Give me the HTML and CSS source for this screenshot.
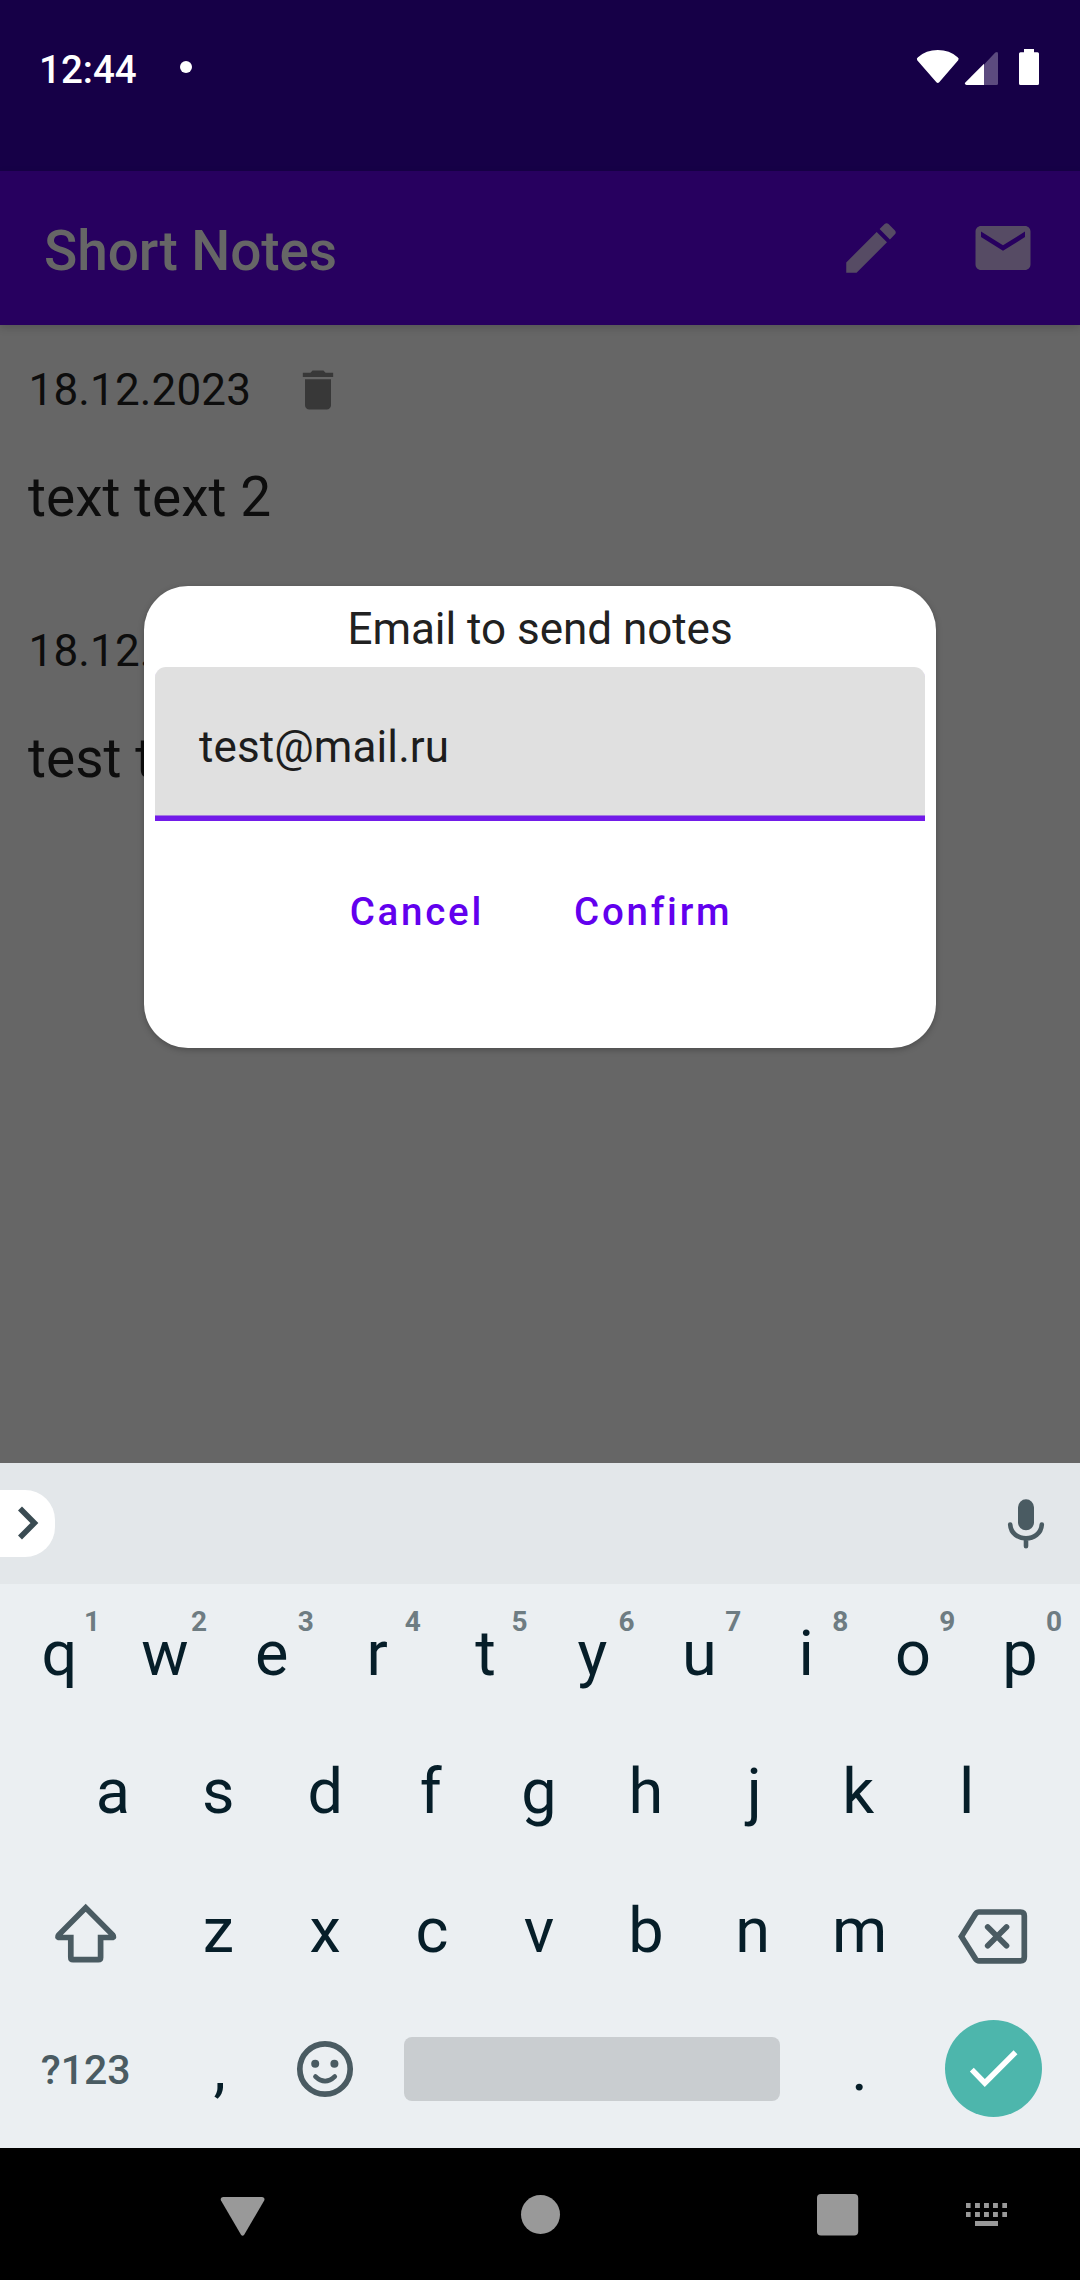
FILE: index.html
```html
<!DOCTYPE html>
<html lang="en">
<head>
<meta charset="utf-8">
<title>Short Notes</title>
<link rel="stylesheet" href="styles.css">
</head>
<body>
<div class="screen">
  <header class="status">
    <span class="time">12:44</span>
    <span class="notification"></span>
    <svg class="status-icons" viewBox="915 47 126 40" width="126" height="40">
      <path fill="#fff" d="M917.2 60.2Q916.2 58.4 918 57.2Q926 50 937.8 50T957.6 57.2Q959.4 58.4 958.2 60.2L939.2 82.2Q937.8 83.8 936.4 82.2Z"/>
      <path fill="#5c4b7f" d="M984 64.5L995.3 52.6Q998 51 998 53.5V83.5Q998 85 996.5 85H984Z"/>
      <path fill="#fff" d="M984 63.8V85H966.5Q964 84.300 965.3 82.500Z"/>
      <path fill="#fff" d="M1024 49h10v3.300h3.500q1.500 0 1.500 1.500v29.700q0 1.500-1.500 1.500h-17q-1.500 0-1.500-1.500v-29.700q0-1.500 1.500-1.500h3.500z"/>
    </svg>
  </header>

  <div class="appbar">
    <h1 class="title">Short Notes</h1>
    <button class="action" aria-label="Edit">
      <svg viewBox="0 0 24 24" width="66" height="66"><path d="M3 17.250V21h3.750L17.810 9.940l-3.750-3.750L3 17.250zM20.710 7.040c.39-.39.39-1.020 0-1.410l-2.340-2.340c-.39-.39-1.020-.39-1.410 0l-1.830 1.830 3.750 3.750 1.830-1.830z"/></svg>
    </button>
    <button class="action" aria-label="Send by email">
      <svg viewBox="0 0 24 24" width="66" height="66"><path d="M20 4H4c-1.100 0-1.990.9-1.990 2L2 18c0 1.100.9 2 2 2h16c1.100 0 2-.9 2-2V6c0-1.100-.9-2-2-2zm0 4l-8 5-8-5V6l8 5 8-5v2z"/></svg>
    </button>
  </div>

  <main class="notes">
    <article class="note">
      <div class="note-head">
        <span class="date">18.12.2023</span>
        <svg class="trash" viewBox="0 0 24 24" width="52" height="52"><path d="M6 19c0 1.100.9 2 2 2h8c1.100 0 2-.9 2-2V7H6v12zM19 4h-3.500l-1-1h-5l-1 1H5v2h14V4z"/></svg>
      </div>
      <p class="note-text">text text 2</p>
    </article>
    <article class="note">
      <div class="note-head">
        <span class="date">18.12.2023</span>
      </div>
      <p class="note-text">test text</p>
    </article>
    <section class="dialog">
      <h2 class="dialog-title">Email to send notes</h2>
      <div class="field">test@mail.ru</div>
      <div class="buttons">
        <button class="text-button">Cancel</button>
        <button class="text-button">Confirm</button>
      </div>
    </section>
  </main>

  <section class="keyboard">
    <div class="suggestions">
      <span class="expand">
        <svg viewBox="0 1490 56 67" width="56" height="67"><path d="M20 1508.500L34.400 1523L20 1537.500" fill="none" stroke="#3a4b52" stroke-width="5.600"/></svg>
      </span>
      <svg viewBox="1006 1496 40 54" width="40" height="54">
        <rect x="1018" y="1498.300" width="16" height="31" rx="8" fill="#4a5b62"/>
        <path d="M1010.200 1523.500C1011.400 1542 1040.600 1542 1041.800 1523.500M1026 1538V1545.300" fill="none" stroke="#4a5b62" stroke-width="4.600" stroke-linecap="round"/>
      </svg>
    </div>
    <div class="row">
      <span class="key nudge-right">q<sup class="hint">1</sup></span>
      <span class="key">w<sup class="hint">2</sup></span>
      <span class="key">e<sup class="hint">3</sup></span>
      <span class="key nudge-left">r<sup class="hint">4</sup></span>
      <span class="key">t<sup class="hint">5</sup></span>
      <span class="key">y<sup class="hint">6</sup></span>
      <span class="key">u<sup class="hint">7</sup></span>
      <span class="key">i<sup class="hint">8</sup></span>
      <span class="key">o<sup class="hint">9</sup></span>
      <span class="key">p<sup class="hint">0</sup></span>
    </div>
    <div class="row row-inset">
      <span class="key nudge-right">a</span>
      <span class="key">s</span>
      <span class="key">d</span>
      <span class="key nudge-left">f</span>
      <span class="key">g</span>
      <span class="key">h</span>
      <span class="key nudge-right">j</span>
      <span class="key nudge-left">k</span>
      <span class="key">l</span>
    </div>
    <div class="row">
      <span class="key wide">
        <svg viewBox="45 1891 80 80" width="80" height="80"><path d="M85.700 1907.700L58.800 1934.800Q56.600 1937.500 59.500 1937.500H70.800V1957.500Q70.800 1959.700 73 1959.700H98.400Q100.600 1959.700 100.600 1957.500V1937.500H111.900Q114.800 1937.500 112.600 1934.800Z" fill="none" stroke="#4a5b62" stroke-width="5.700"/></svg>
      </span>
      <span class="key">z</span>
      <span class="key">x</span>
      <span class="key">c</span>
      <span class="key">v</span>
      <span class="key">b</span>
      <span class="key">n</span>
      <span class="key">m</span>
      <span class="key wide">
        <svg viewBox="953 1891 80 80" width="80" height="80"><path d="M961.400 1936.400L975.600 1913.800Q976.800 1912 979 1912H1020.500Q1024.300 1912 1024.300 1915.800V1957Q1024.300 1960.800 1020.500 1960.800H979Q976.800 1960.800 975.600 1959ZM987.700 1927L1006.500 1945.800M1006.500 1927L987.700 1945.800" fill="none" stroke="#4a5b62" stroke-width="5.700" stroke-linecap="round"/></svg>
      </span>
    </div>
    <div class="row">
      <span class="key wide symbols">?123</span>
      <span class="key nudge-right">,</span>
      <span class="key">
        <svg viewBox="285 2029 80 80" width="80" height="80" fill="none" stroke="#4a5b62">
          <circle cx="325" cy="2069" r="25.200" stroke-width="5.700"/>
          <circle cx="315.200" cy="2063.700" r="4" fill="#4a5b62" stroke="none"/>
          <circle cx="334.400" cy="2063.700" r="4" fill="#4a5b62" stroke="none"/>
          <path d="M315.400 2076.500Q325 2085.700 334.800 2076.500" stroke-width="4.600" stroke-linecap="round"/>
        </svg>
      </span>
      <span class="key space"><span class="spacebar"></span></span>
      <span class="key">.</span>
      <span class="key wide">
        <svg viewBox="943 2019 100 100" width="100" height="100"><circle cx="993.500" cy="2068.500" r="48.500" fill="#4db6ac"/><path d="M971.800 2069.700L984.800 2083L1015.500 2052.300" fill="none" stroke="#fff" stroke-width="5.500"/></svg>
      </span>
    </div>
  </section>

  <nav class="navbar">
    <svg viewBox="0 2148 1080 132" width="1080" height="132" fill="#999">
      <path d="M223 2197H262.200Q265.400 2197.500 264.200 2200.500L244.200 2234.800Q242.600 2236.600 241 2234.800L221 2200.500Q219.800 2197.500 223 2197Z"/>
      <circle cx="540.500" cy="2214.500" r="19.500"/>
      <rect x="817" y="2194" width="41.200" height="41.500" rx="4"/>
      <path d="M966 2203h4.600v5h-4.600zM975 2203h4.900v5h-4.900zM984 2203h4.900v5h-4.900zM993 2203h4.900v5h-4.900zM1002.300 2203h4.700v5h-4.700zM966 2212h4.600v5h-4.600zM975 2212h4.900v5h-4.900zM984 2212h4.900v5h-4.900zM993 2212h4.900v5h-4.900zM1002.300 2212h4.700v5h-4.700zM975 2221h23v5h-23z"/>
    </svg>
  </nav>
</div>
</body>
</html>
```
FILE: styles.css
```css
* {
  box-sizing: border-box;
}

body {
  margin: 0;
  font-family: Roboto, "Noto Sans", sans-serif;
}

svg {
  display: block;
  flex: none;
}

button {
  border: 0;
  padding: 0;
  background: none;
  font: inherit;
}

.screen {
  display: flex;
  flex-direction: column;
  width: 1080px;
  height: 2280px;
  overflow: hidden;
  background: #666;
}

/* System status bar */
.status {
  display: flex;
  align-items: center;
  height: 171px;
  padding: 0 39px 37px 39px;
  background: #160047;
}

.time {
  padding-top: 6px;
  color: #fff;
  font-size: 38.5px;
  font-weight: 500;
  line-height: 46px;
}

.notification {
  width: 12px;
  height: 12px;
  margin-left: 43px;
  border-radius: 50%;
  background: #fff;
}

.status-icons {
  margin-left: auto;
}

/* App bar */
.appbar {
  z-index: 1;
  display: flex;
  align-items: center;
  height: 154px;
  padding: 0 11px 0 44px;
  background: #27005f;
  box-shadow: 0 3px 8px rgba(0, 0, 0, 0.16);
}

.title {
  flex: 1;
  margin: 0;
  padding-top: 6px;
  color: #666;
  font-size: 55px;
  font-weight: 500;
  line-height: 66px;
  letter-spacing: -0.1px;
}

.action {
  display: flex;
  align-items: center;
  justify-content: center;
  width: 132px;
  height: 132px;
  fill: #564b64;
}

/* Notes list */
.notes {
  position: relative;
  height: 1138px;
  padding: 26px 28px 0;
  color: #0d0d0d;
}

.note {
  height: 261px;
}

.note-head {
  display: flex;
  align-items: center;
  height: 77px;
  gap: 40px;
}

.date {
  width: 224px;
  padding-left: 0.5px;
  font-size: 44px;
  line-height: 52px;
  letter-spacing: 0.15px;
}

.trash {
  margin-top: 1px;
  fill: #383838;
}

.note-text {
  margin: 36px 0 0;
  font-size: 55px;
  line-height: 66px;
  letter-spacing: 0;
}

/* Email dialog */
.dialog {
  position: absolute;
  top: 261px;
  left: 144px;
  display: flex;
  flex-direction: column;
  width: 792px;
  height: 462px;
  padding: 11px;
  border-radius: 44px;
  background: #fff;
  box-shadow: 0 2px 6px rgba(0, 0, 0, 0.25);
}

.dialog-title {
  margin: 0;
  padding-top: 6px;
  height: 70px;
  color: #212121;
  font-size: 44px;
  font-weight: 400;
  line-height: 52px;
  letter-spacing: -0.03px;
  text-align: center;
}

.field {
  height: 154px;
  padding: 54px 44px 0;
  border-bottom: 5px solid #721be9;
  border-radius: 11px 11px 0 0;
  background: #e0e0e0;
  box-shadow: inset 0 -1px #a57be0;
  color: #1d1d1d;
  font-size: 44px;
  line-height: 52px;
  letter-spacing: 0.1px;
}

.buttons {
  display: flex;
  justify-content: center;
  gap: 90px;
  padding: 67px 0 0 2px;
}

.text-button {
  color: #6200ee;
  font-size: 38.5px;
  font-weight: 500;
  line-height: 48px;
  letter-spacing: 2.75px;
}

/* On-screen keyboard */
.keyboard {
  z-index: 1;
  height: 685px;
  background: #ebeff2;
}

.suggestions {
  display: flex;
  align-items: center;
  justify-content: space-between;
  height: 121px;
  margin-bottom: 0.5px;
  padding-right: 34px;
  background: #e3e7ea;
}

.expand {
  width: 55.4px;
  height: 67px;
  border-radius: 0 30px 30px 0;
  background: #fff;
}

.row {
  display: flex;
  height: 138.5px;
  padding: 0 6.5px 0 4.5px;
}

.row-inset {
  padding: 0 60px 0 58px;
}

.key {
  position: relative;
  display: flex;
  flex: none;
  align-items: center;
  justify-content: center;
  width: 106.9px;
  color: #061e29;
  font-size: 63px;
  line-height: 74px;
}

.nudge-right {
  padding-left: 3px;
}

.nudge-left {
  padding-right: 3px;
}

.wide {
  width: 160.35px;
}

.hint {
  position: absolute;
  top: 20px;
  left: 79.5px;
  color: #6e7c82;
  font-size: 28px;
  font-weight: 700;
  line-height: 34px;
}

.symbols {
  padding: 1px 0 0 2px;
  color: #4a5b62;
  font-size: 41px;
  font-weight: 500;
}

.space {
  width: 427.6px;
}

.spacebar {
  width: 376px;
  height: 64px;
  border-radius: 8px;
  background: #c9cdd0;
}

/* System navigation */
.navbar {
  z-index: 1;
  height: 132px;
  background: #000;
}
```
